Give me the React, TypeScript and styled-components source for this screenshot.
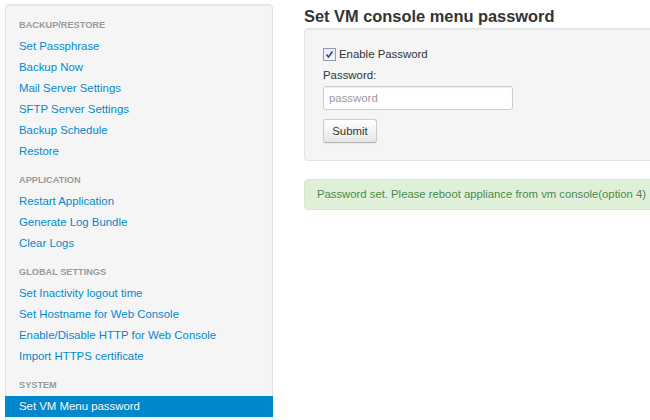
import React from "react";
import styled, { createGlobalStyle } from "styled-components";

const Global = createGlobalStyle`
  html, body { margin: 0; padding: 0; background: #fff; overflow: hidden; }
  body { font-family: "Liberation Sans", Arial, sans-serif; font-size: 11.4px; color: #333; }
  * { box-sizing: border-box; }
`;

const Page = styled.div`
  display: flex;
  align-items: flex-start;
  gap: 31px;
  padding: 4px 0 0 5px;
  width: 1000px;
`;

const Sidebar = styled.nav`
  flex: 0 0 268px;
  background: #f5f5f5;
  border: 1px solid #e3e3e3;
  border-radius: 4px;
  padding: 9.5px 0 6px;
  box-shadow: inset 0 1px 1px rgba(0,0,0,0.05);
`;

const NavHeader = styled.div<{ $first?: boolean }>`
  margin-top: ${(p) => (p.$first ? 0 : 8)}px;
  padding: 0 13px;
  line-height: 21px;
  font-size: 9.2px;
  font-weight: bold;
  text-transform: uppercase;
  color: #999;
  text-shadow: 0 1px 0 rgba(255,255,255,0.5);
`;

const NavLink = styled.a<{ $active?: boolean }>`
  display: block;
  margin: 0 -1px;
  padding: 0 14px;
  line-height: 21px;
  font-size: 11.4px;
  color: ${(p) => (p.$active ? "#fff" : "#0088cc")};
  background: ${(p) => (p.$active ? "#0088cc" : "transparent")};
  text-decoration: none;
  text-shadow: ${(p) => (p.$active ? "0 -1px 0 rgba(0,0,0,0.2)" : "0 1px 0 rgba(255,255,255,0.5)")};
`;

const Main = styled.main`
  flex: 0 0 480px;
`;

const Title = styled.h4`
  margin: 0;
  font-size: 16.4px;
  line-height: 24px;
  font-weight: bold;
  color: #333;
`;

const Well = styled.div`
  background: #f5f5f5;
  border: 1px solid #e3e3e3;
  border-radius: 4px;
  padding: 15px 18px 17px;
  box-shadow: inset 0 1px 1px rgba(0,0,0,0.05);
  display: flex;
  flex-direction: column;
  align-items: flex-start;
`;

const CheckRow = styled.label`
  display: flex;
  align-items: center;
  gap: 3px;
  line-height: 20px;
  font-size: 11.4px;
  color: #333;
`;

const Box = styled.span`
  width: 13px;
  height: 13px;
  border: 1px solid #8e9bb0;
  background: linear-gradient(#e9ecf1, #f7f8fa);
  display: flex;
  align-items: center;
  justify-content: center;
`;

const FieldLabel = styled.label`
  margin-top: 1px;
  line-height: 20px;
  font-size: 11.4px;
  color: #333;
`;

const Input = styled.input`
  margin-top: 1px;
  width: 190px;
  height: 24px;
  padding: 2px 5px;
  font-family: "Liberation Sans", Arial, sans-serif;
  font-size: 11.4px;
  color: #555;
  background: #fff;
  border: 1px solid #ccc;
  border-radius: 3px;
  box-shadow: inset 0 1px 1px rgba(0,0,0,0.075);
  &::placeholder { color: #999; }
`;

const Button = styled.button`
  margin-top: 9px;
  width: 54px;
  height: 24px;
  padding: 0;
  font-family: "Liberation Sans", Arial, sans-serif;
  font-size: 11.4px;
  color: #333;
  background: linear-gradient(#ffffff, #e6e6e6);
  border: 1px solid #ccc;
  border-bottom-color: #b3b3b3;
  border-radius: 3px;
  box-shadow: inset 0 1px 0 rgba(255,255,255,0.2), 0 1px 2px rgba(0,0,0,0.05);
  text-shadow: 0 1px 1px rgba(255,255,255,0.75);
`;

const Alert = styled.div`
  margin-top: 18px;
  background: #dff0d8;
  border: 1px solid #d6e9c6;
  border-radius: 4px;
  padding: 0 12px;
  line-height: 29px;
  font-size: 11.3px;
  color: #468847;
  text-shadow: 0 1px 0 rgba(255,255,255,0.5);
  white-space: nowrap;
`;

type Section = { title: string; items: string[] };

const sections: Section[] = [
  {
    title: "Backup/Restore",
    items: ["Set Passphrase", "Backup Now", "Mail Server Settings", "SFTP Server Settings", "Backup Schedule", "Restore"],
  },
  { title: "Application", items: ["Restart Application", "Generate Log Bundle", "Clear Logs"] },
  {
    title: "Global Settings",
    items: ["Set Inactivity logout time", "Set Hostname for Web Console", "Enable/Disable HTTP for Web Console", "Import HTTPS certificate"],
  },
  { title: "System", items: ["Set VM Menu password"] },
];

export default function App() {
  return (
    <>
      <Global />
      <Page>
        <Sidebar>
          {sections.map((s, i) => (
            <React.Fragment key={s.title}>
              <NavHeader $first={i === 0}>{s.title}</NavHeader>
              {s.items.map((it) => (
                <NavLink key={it} href="#" $active={it === "Set VM Menu password"}>
                  {it}
                </NavLink>
              ))}
            </React.Fragment>
          ))}
        </Sidebar>
        <Main>
          <Title>Set VM console menu password</Title>
          <Well>
            <CheckRow>
              <Box>
                <svg width="9" height="9" viewBox="0 0 9 9">
                  <path d="M1.5 4.5 L3.5 7 L7.5 1.5" fill="none" stroke="#2a3f8f" strokeWidth="1.5" />
                </svg>
              </Box>
              Enable Password
            </CheckRow>
            <FieldLabel>Password:</FieldLabel>
            <Input type="password" placeholder="password" />
            <Button>Submit</Button>
          </Well>
          <Alert>Password set. Please reboot appliance from vm console(option 4)</Alert>
        </Main>
      </Page>
    </>
  );
}
